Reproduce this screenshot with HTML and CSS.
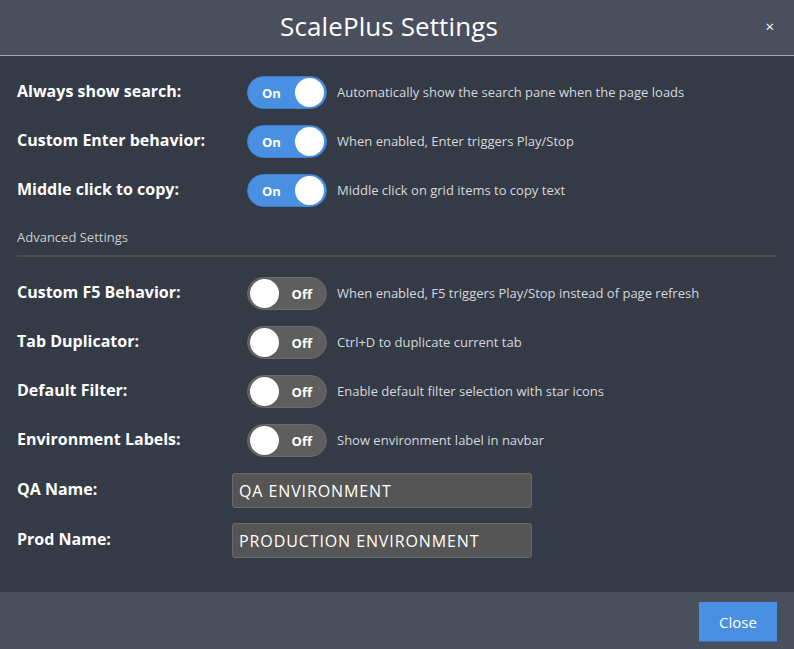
FILE: index.html
```html
<!DOCTYPE html>
<html>
<head>
<meta charset="utf-8">
<link rel="stylesheet" href="styles.css">
</head>
<body>
<div class="modal">
  <header class="modal-header">
    <h1 class="modal-title">ScalePlus Settings</h1>
    <span class="modal-close">×</span>
  </header>
  <main class="modal-body">
    <div class="row">
      <span class="label">Always show search:</span>
      <span class="toggle on"><span class="toggle-text">On</span><span class="knob"></span></span>
      <span class="desc">Automatically show the search pane when the page loads</span>
    </div>
    <div class="row">
      <span class="label">Custom Enter behavior:</span>
      <span class="toggle on"><span class="toggle-text">On</span><span class="knob"></span></span>
      <span class="desc">When enabled, Enter triggers Play/Stop</span>
    </div>
    <div class="row">
      <span class="label">Middle click to copy:</span>
      <span class="toggle on"><span class="toggle-text">On</span><span class="knob"></span></span>
      <span class="desc">Middle click on grid items to copy text</span>
    </div>
    <div class="section-title">Advanced Settings</div>
    <div class="row">
      <span class="label">Custom F5 Behavior:</span>
      <span class="toggle off"><span class="knob"></span><span class="toggle-text">Off</span></span>
      <span class="desc">When enabled, F5 triggers Play/Stop instead of page refresh</span>
    </div>
    <div class="row">
      <span class="label">Tab Duplicator:</span>
      <span class="toggle off"><span class="knob"></span><span class="toggle-text">Off</span></span>
      <span class="desc">Ctrl+D to duplicate current tab</span>
    </div>
    <div class="row">
      <span class="label">Default Filter:</span>
      <span class="toggle off"><span class="knob"></span><span class="toggle-text">Off</span></span>
      <span class="desc">Enable default filter selection with star icons</span>
    </div>
    <div class="row">
      <span class="label">Environment Labels:</span>
      <span class="toggle off"><span class="knob"></span><span class="toggle-text">Off</span></span>
      <span class="desc">Show environment label in navbar</span>
    </div>
    <div class="input-row first">
      <span class="label">QA Name:</span>
      <input class="text-input" type="text" value="QA ENVIRONMENT">
    </div>
    <div class="input-row">
      <span class="label">Prod Name:</span>
      <input class="text-input" type="text" value="PRODUCTION ENVIRONMENT">
    </div>
  </main>
  <footer class="modal-footer">
    <button class="close-btn">Close</button>
  </footer>
</div>
</body>
</html>
```
FILE: styles.css
```css
* { box-sizing: border-box; }
html, body { margin: 0; padding: 0; }
body {
  width: 794px;
  height: 649px;
  background: #343a46;
  font-family: "Open Sans", "Liberation Sans", sans-serif;
  color: #fff;
  overflow: hidden;
}
.modal { display: flex; flex-direction: column; height: 649px; }
.modal-header {
  height: 56px;
  background: #4a4f5e;
  border-bottom: 1px solid #a7aab1;
  display: flex;
  align-items: center;
  justify-content: center;
  position: relative;
  padding-right: 16px;
}
.modal-title {
  margin: 0 0 3px 0;
  font-size: 26px;
  font-weight: 400;
  color: #fff;
  letter-spacing: 0.1px;
}
.modal-close {
  position: absolute;
  right: 20px;
  top: 16px;
  font-size: 15px;
  color: #fff;
}
.modal-body {
  flex: 1;
  padding: 20px 17px 0 17px;
  display: flex;
  flex-direction: column;
}
.row {
  display: flex;
  align-items: center;
  height: 33px;
  margin-bottom: 16px;
}
.label {
  width: 230px;
  font-size: 16px;
  font-weight: 700;
  color: #fff;
  flex-shrink: 0;
  margin-top: -3px;
}
.toggle {
  width: 80px;
  height: 33px;
  border-radius: 17px;
  display: flex;
  align-items: center;
  padding: 0 2px;
  flex-shrink: 0;
}
.toggle.on {
  background: #4a90e2;
  border: 1px solid #3f7fcb;
  justify-content: space-between;
  padding-left: 14px;
}
.toggle.off {
  background: #5e5e5e;
  border: 1px solid #6b6b6b;
  justify-content: space-between;
  padding-right: 14px;
}
.knob {
  width: 29px;
  height: 29px;
  border-radius: 50%;
  background: #fff;
}
.toggle-text {
  font-size: 13px;
  font-weight: 700;
  color: #fff;
}
.desc {
  margin-left: 10px;
  font-size: 13px;
  color: #d6d8dc;
  margin-top: -2px;
}
.section-title {
  font-size: 13px;
  color: #c9ccd1;
  margin-top: 5px;
  padding-bottom: 9px;
  border-bottom: 2px solid #464b55;
  margin-bottom: 20px;
}
.input-row {
  display: flex;
  align-items: center;
  height: 35px;
  margin-bottom: 15px;
}
.input-row .label { width: 215px; }
.text-input {
  width: 300px;
  height: 35px;
  background: #555555;
  border: 1px solid #6a6a6a;
  border-radius: 3px;
  color: #fff;
  font-family: "Open Sans", "Liberation Sans", sans-serif;
  font-size: 16px;
  letter-spacing: 0.9px;
  padding: 0 6px;
}
.modal-footer {
  height: 57px;
  background: #4a4f5e;
  display: flex;
  align-items: center;
  justify-content: flex-end;
  padding-right: 17px;
}
.close-btn {
  width: 78px;
  height: 40px;
  background: #4a90e2;
  border: none;
  border-bottom: 1px solid #3d6fab;
  color: #fff;
  font-family: "Open Sans", "Liberation Sans", sans-serif;
  font-size: 15px;
  margin-top: 3px;
}
```
